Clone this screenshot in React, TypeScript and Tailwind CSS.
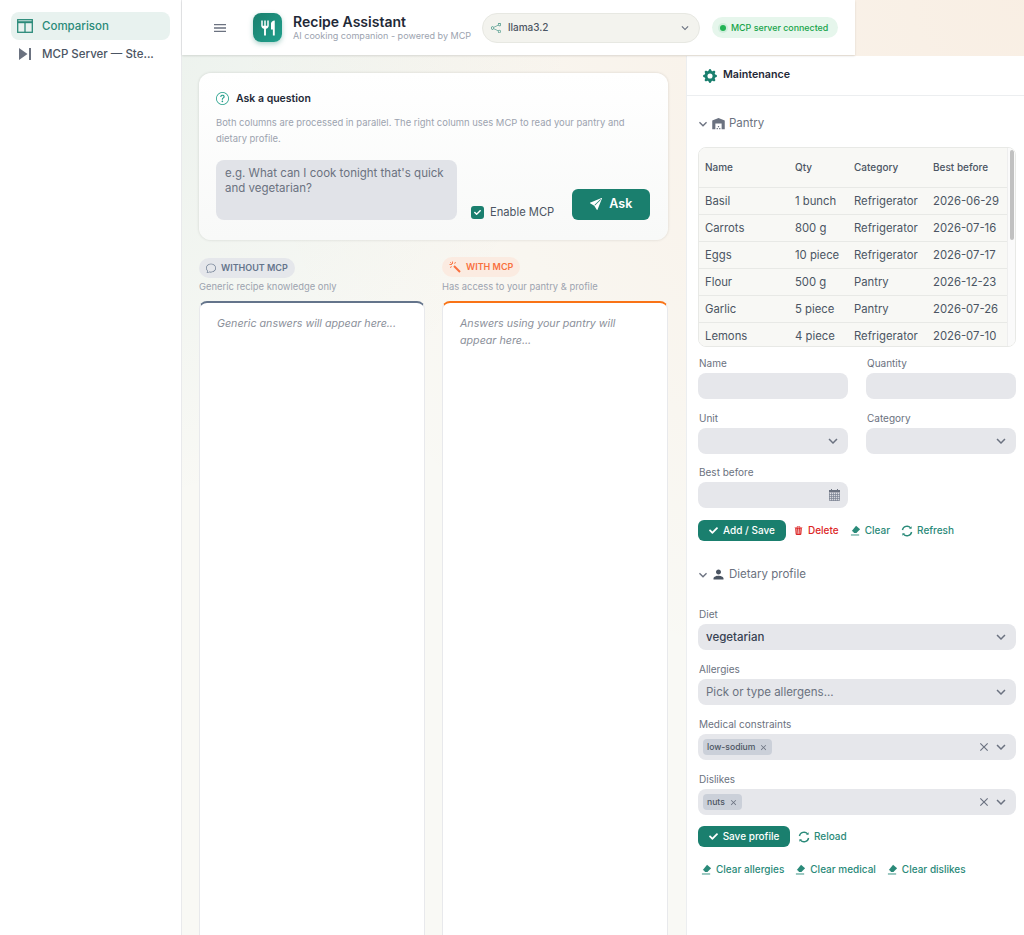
import React from "react";
import { MdSkipNext, MdRestaurant, MdMenu, MdPerson, MdClose, MdExpandMore, MdWarehouse } from "react-icons/md";
import { BsQuestionCircle, BsShare, BsSendFill, BsChat, BsTrash3Fill, BsGearFill } from "react-icons/bs";
import { FaCheck } from "react-icons/fa";

const Eraser = () => (
  <svg width="11" height="11" viewBox="0 0 12 12" className="shrink-0">
    <path d="M6.6 0.8 L11 4.6 L7 8.6 H4.2 L2 6.6 Z" fill="currentColor" />
    <path d="M1 10.9 H10" stroke="currentColor" strokeWidth="1" fill="none" />
    <path d="M2.2 6.6 L4.4 8.6" stroke="white" strokeWidth="0.6" />
  </svg>
);

const Sync = () => (
  <svg width="12" height="12" viewBox="0 0 12 12" fill="none" stroke="currentColor" strokeWidth="1.4" className="shrink-0">
    <path d="M1.4 5 A4.7 4.7 0 0 1 9.6 2.9" />
    <path d="M10.6 7 A4.7 4.7 0 0 1 2.4 9.1" />
    <path d="M10.6 1.2 V3.8 H8" fill="currentColor" stroke="none" />
    <path d="M1.4 10.8 V8.2 H4" fill="currentColor" stroke="none" />
  </svg>
);

const Wand = () => (
  <svg width="12" height="12" viewBox="0 0 12 12" fill="none" stroke="currentColor" className="shrink-0">
    <path d="M5 5 L11 11" strokeWidth="2" />
    <path d="M3.5 0.5 V3 M0.5 3.5 H3 M1.2 1.2 L2.6 2.6 M6.5 1 L5.6 2.8 M1 6.5 L2.8 5.6" strokeWidth="0.9" />
  </svg>
);

const Calendar = () => (
  <svg width="11" height="12" viewBox="0 0 11 12" fill="none" className="shrink-0">
    <rect x="0" y="1" width="11" height="2.4" fill="#6b7280" />
    <rect x="2" y="0" width="1" height="2" fill="#6b7280" />
    <rect x="8" y="0" width="1" height="2" fill="#6b7280" />
    <path d="M0.4 3.5 V11.6 H10.6 V3.5 M0 5.6 H11 M0 7.6 H11 M0 9.6 H11 M2.6 3.5 V12 M4.6 3.5 V12 M6.6 3.5 V12 M8.6 3.5 V12" stroke="#7b8290" strokeWidth="0.8" />
  </svg>
);

const Label = ({ children }: { children: React.ReactNode }) => (
  <div className="text-[10px] leading-[14px] text-[#6b7280] pl-[1px] mb-[3px] h-[14px]">{children}</div>
);

const Chevron = ({ className = "" }: { className?: string }) => (
  <MdExpandMore className={"text-[#6b7280] text-[18px] shrink-0 " + className} />
);

const Field = ({ children, className = "" }: { children?: React.ReactNode; className?: string }) => (
  <div className={"h-[26px] rounded-[8px] bg-[#e6e7eb] flex items-center justify-between " + className}>
    {children}
  </div>
);

const rows = [
  ["Basil", "1 bunch", "Refrigerator", "2026-06-29"],
  ["Carrots", "800 g", "Refrigerator", "2026-07-16"],
  ["Eggs", "10 piece", "Refrigerator", "2026-07-17"],
  ["Flour", "500 g", "Pantry", "2026-12-23"],
  ["Garlic", "5 piece", "Pantry", "2026-07-26"],
  ["Lemons", "4 piece", "Refrigerator", "2026-07-10"],
];

const TealLink = ({ icon, children }: { icon: React.ReactNode; children: React.ReactNode }) => (
  <div className="flex items-center gap-[4px] text-[10px] font-medium text-[#2a8a79]">
    {icon}
    <span>{children}</span>
  </div>
);

const Tag = ({ children }: { children: React.ReactNode }) => (
  <div className="h-[16px] rounded-[4px] bg-[#cbd0d9] flex items-center gap-[4px] px-[4px] text-[8.6px] font-medium text-[#4b5563]">
    {children}
    <MdClose className="text-[9px] text-[#6b7280]" />
  </div>
);

export default function App() {
  return (
    <div className="flex h-[935px] w-[1024px] overflow-hidden bg-[#f9f9f5] bg-[radial-gradient(ellipse_at_0%_0%,rgba(26,127,110,0.08),transparent_40%),radial-gradient(ellipse_at_100%_0%,rgba(249,115,22,0.08),transparent_55%)] font-['Inter',sans-serif]">
      <aside className="w-[182px] shrink-0 bg-white border-r border-[#e9eaec] px-[11px] pt-[12px]">
        <div className="h-[28px] rounded-[8px] bg-[#e8f2ef] flex items-center pl-[6px] gap-[9px] w-[159px] text-[#2a8a79] text-[11.5px] font-medium">
          <svg width="16" height="14" viewBox="0 0 16 14" fill="none" stroke="#2a8a79" strokeWidth="1.3">
            <rect x="0.7" y="0.7" width="14.6" height="12.6" />
            <path d="M0.7 3.2H15.3" strokeWidth="2" />
            <path d="M8 3V13.3" />
          </svg>
          <span className="pt-[1px]">Comparison</span>
        </div>
        <div className="h-[28px] flex items-center pl-[6px] text-[#4b5563] text-[11.5px] font-medium">
          <MdSkipNext className="text-[#6b7280] text-[24px] -ml-[4px] mr-[5px] shrink-0" />
          <span className="pt-[1px]">MCP Server — Ste...</span>
        </div>
      </aside>

      <div className="flex-1 min-w-0 flex flex-col">
        <header className="h-[55px] w-[673px] bg-white shadow-[0_1px_2px_rgba(0,0,0,0.12)] flex items-center shrink-0 z-10">
          <MdMenu className="ml-[30px] text-[#6b7280] text-[16px]" />
          <div className="ml-[25px] w-[29px] h-[29px] rounded-[8px] bg-gradient-to-br from-[#1a7f6e] to-[#20a08c] shadow-[0_2px_5px_rgba(26,127,110,0.35)] flex items-center justify-center">
            <MdRestaurant className="text-white text-[18px]" />
          </div>
          <div className="ml-[11px] w-[178px] mb-[2px]">
            <div className="text-[14px] leading-[17px] font-semibold text-[#1f2937]">Recipe Assistant</div>
            <div className="text-[9.05px] leading-[11px] text-[#9ca3af] whitespace-nowrap">AI cooking companion - powered by MCP</div>
          </div>
          <div className="ml-[11px] w-[218px] h-[30px] rounded-full bg-[#f3f3ee] border border-[#e7e8e2] flex items-center pl-[8px] pr-[7px]">
            <BsShare className="text-[#1a7f6e] text-[10px] opacity-80" />
            <span className="ml-[7px] text-[10px] font-medium text-[#4b5563]">llama3.2</span>
            <Chevron className="ml-auto !text-[14px]" />
          </div>
          <div className="ml-[12px] w-[126px] h-[21px] rounded-full bg-[#e6f6ec] flex items-center pl-[8px] gap-[5px]">
            <span className="w-[6px] h-[6px] rounded-full bg-[#22b455] shadow-[0_0_0_2px_#cfeedb]" />
            <span className="text-[8.9px] font-medium text-[#16a34a] whitespace-nowrap">MCP server connected</span>
          </div>
        </header>

        <div className="flex-1 flex min-h-0 mt-[1px]">
          <main className="w-[504px] shrink-0 pl-[17px] pr-[18px] pt-[17px]">
            <section className="h-[167px] rounded-[12px] bg-gradient-to-b from-white to-[#f8f9f8] shadow-[0_0_3px_rgba(0,0,0,0.14)] pl-[17px] pr-[17px] pt-[18px]">
              <div className="flex items-center gap-[7px]">
                <BsQuestionCircle className="text-[#1f9d88] text-[13px]" />
                <span className="text-[10.5px] font-semibold text-[#1f2937]">Ask a question</span>
              </div>
              <p className="mt-[8px] text-[9.43px] leading-[16px] text-[#9ca3af]">
                Both columns are processed in parallel. The right column uses MCP to read your pantry and dietary profile.
              </p>
              <div className="flex items-end mt-[13px]">
                <div className="w-[241px] h-[60px] rounded-[8px] bg-[#e1e3e8] px-[9px] pt-[6px] text-[11.5px] leading-[15.5px] text-[#6b7280]">
                  e.g. What can I cook tonight that's quick and vegetarian?
                </div>
                <div className="ml-[14px] -mb-[1px] flex items-center gap-[6px]">
                  <span className="w-[13px] h-[13px] rounded-[3px] bg-[#1a7f6e] flex items-center justify-center">
                    <FaCheck className="text-white text-[7px]" />
                  </span>
                  <span className="text-[11.2px] text-[#4b5563]">Enable MCP</span>
                </div>
                <div className="ml-[18px] w-[78px] h-[31px] rounded-[6px] bg-[#1a7f6e] flex items-center justify-center gap-[7px] text-white text-[12.5px] font-semibold">
                  <BsSendFill className="text-[12px]" />
                  Ask
                </div>
              </div>
            </section>

            <div className="flex gap-[17px] mt-[15px]">
              <div className="w-[226px]">
                <div className="inline-flex h-[20px] rounded-full bg-[#e5e7eb] items-center px-[7px] gap-[5px] text-[9px] font-semibold text-[#64748b]">
                  <BsChat className="text-[10px]" />
                  WITHOUT MCP
                </div>
                <div className="text-[9.4px] leading-[12px] text-[#9ca3af] mt-[2px]">Generic recipe knowledge only</div>
                <div className="mt-[8px] h-[700px] rounded-t-[8px] bg-white border border-[#e8e9ec] border-t-2 border-t-[#64748b] px-[17px] pt-[12px] text-[10.7px] leading-[17px] italic text-[#8b909a]">
                  Generic answers will appear here...
                </div>
              </div>
              <div className="w-[226px]">
                <div className="inline-flex h-[20px] rounded-full bg-[#fbebe1] items-center px-[7px] gap-[5px] text-[9px] font-semibold text-[#f9703e]">
                  <Wand />
                  WITH MCP
                </div>
                <div className="text-[9.4px] leading-[12px] text-[#9ca3af] mt-[2px]">Has access to your pantry &amp; profile</div>
                <div className="mt-[8px] h-[700px] rounded-t-[8px] bg-white border border-[#e8e9ec] border-t-2 border-t-[#f97316] px-[17px] pt-[12px] text-[10.7px] leading-[17px] italic text-[#8b909a]">
                  Answers using your pantry will appear here...
                </div>
              </div>
            </div>
          </main>

          <aside className="flex-1 min-w-0 bg-white border-l border-[#eceef0]">
            <div className="h-[40px] border-b border-[#eceef0] flex items-center pl-[16px] gap-[6px]">
              <BsGearFill className="text-[#1a7f6e] text-[14px]" />
              <span className="text-[10.7px] font-semibold text-[#1f2937]">Maintenance</span>
            </div>
            <div className="pl-[11px] pr-[8px]">
              <div className="h-[55px] flex items-center text-[11.5px] text-[#6b7280]">
                <Chevron className="!text-[16px] -ml-[3px]" />
                <MdWarehouse className="text-[15px]" />
                <span className="ml-[3px]">Pantry</span>
              </div>
              <div className="relative h-[200px] -mt-[4px] rounded-[8px] border border-[#e8e9e6] overflow-hidden text-[11.3px] text-[#4b5563]">
                <div className="h-[40px] bg-[#f8f8f5] grid grid-cols-[90px_59px_79px_1fr] items-center pl-[6px] text-[10px] font-medium border-b border-[#e8e9e6]">
                  <span>Name</span><span>Qty</span><span>Category</span><span>Best before</span>
                </div>
                {rows.map((r) => (
                  <div key={r[0]} className="h-[27px] bg-[#f8f8f5] grid grid-cols-[90px_59px_79px_1fr] items-center pl-[6px] border-b border-[#e8e9e6] whitespace-nowrap">
                    {r.map((c) => <span key={c}>{c}</span>)}
                  </div>
                ))}
                <div className="absolute top-0 right-0 bottom-0 w-[8px] bg-[#fafafa] border-l border-[#eeeeee]">
                  <div className="mt-[2px] mx-auto w-[4px] h-[90px] rounded-full bg-[#c1c1c1]" />
                </div>
              </div>

              <div className="grid grid-cols-[150px_150px] gap-x-[18px] gap-y-[11.6px] mt-[9px]">
                <div><Label>Name</Label><Field /></div>
                <div><Label>Quantity</Label><Field /></div>
                <div><Label>Unit</Label><Field className="justify-end pr-[6px]"><Chevron /></Field></div>
                <div><Label>Category</Label><Field className="justify-end pr-[6px]"><Chevron /></Field></div>
                <div><Label>Best before</Label><Field className="justify-end pr-[8px]"><Calendar /></Field></div>
              </div>

              <div className="flex items-center mt-[12px]">
                <div className="h-[21px] w-[88px] rounded-[6px] bg-[#1a7f6e] flex items-center justify-center gap-[5px] text-white text-[10px] font-medium">
                  <FaCheck className="text-[9px]" />Add / Save
                </div>
                <div className="ml-[8px] flex items-center gap-[5px] text-[10px] font-medium text-[#dc2626]">
                  <BsTrash3Fill className="text-[9px]" />Delete
                </div>
                <div className="ml-[11px]"><TealLink icon={<Eraser />}>Clear</TealLink></div>
                <div className="ml-[11px]"><TealLink icon={<Sync />}>Refresh</TealLink></div>
              </div>

              <div className="h-[21px] mt-[23px] flex items-center text-[11.5px] text-[#6b7280]">
                <Chevron className="!text-[16px] -ml-[3px]" />
                <MdPerson className="text-[15px] text-[#4b5563]" />
                <span className="ml-[3px]">Dietary profile</span>
              </div>

              <div className="flex flex-col gap-[12px] mt-[22px] w-[318px]">
                <div><Label>Diet</Label><Field className="pl-[8px] pr-[6px]"><span className="text-[11.5px] font-medium text-[#374151]">vegetarian</span><Chevron /></Field></div>
                <div><Label>Allergies</Label><Field className="pl-[8px] pr-[6px]"><span className="text-[11.5px] text-[#6b7280]">Pick or type allergens...</span><Chevron /></Field></div>
                <div><Label>Medical constraints</Label><Field className="pl-[5px] pr-[6px]"><Tag>low-sodium</Tag><span className="ml-auto mr-[1px]"><MdClose className="text-[#6b7280] text-[14px]" /></span><Chevron /></Field></div>
                <div><Label>Dislikes</Label><Field className="pl-[5px] pr-[6px]"><Tag>nuts</Tag><span className="ml-auto mr-[1px]"><MdClose className="text-[#6b7280] text-[14px]" /></span><Chevron /></Field></div>
              </div>

              <div className="flex items-center mt-[11px]">
                <div className="h-[21px] w-[92px] rounded-[6px] bg-[#1a7f6e] flex items-center justify-center gap-[5px] text-white text-[10px] font-medium">
                  <FaCheck className="text-[9px]" />Save profile
                </div>
                <div className="ml-[8px]"><TealLink icon={<Sync />}>Reload</TealLink></div>
              </div>

              <div className="flex items-center gap-[11px] mt-[15px] ml-[3px]">
                <TealLink icon={<Eraser />}>Clear allergies</TealLink>
                <TealLink icon={<Eraser />}>Clear medical</TealLink>
                <TealLink icon={<Eraser />}>Clear dislikes</TealLink>
              </div>
            </div>
          </aside>
        </div>
      </div>
    </div>
  );
}
